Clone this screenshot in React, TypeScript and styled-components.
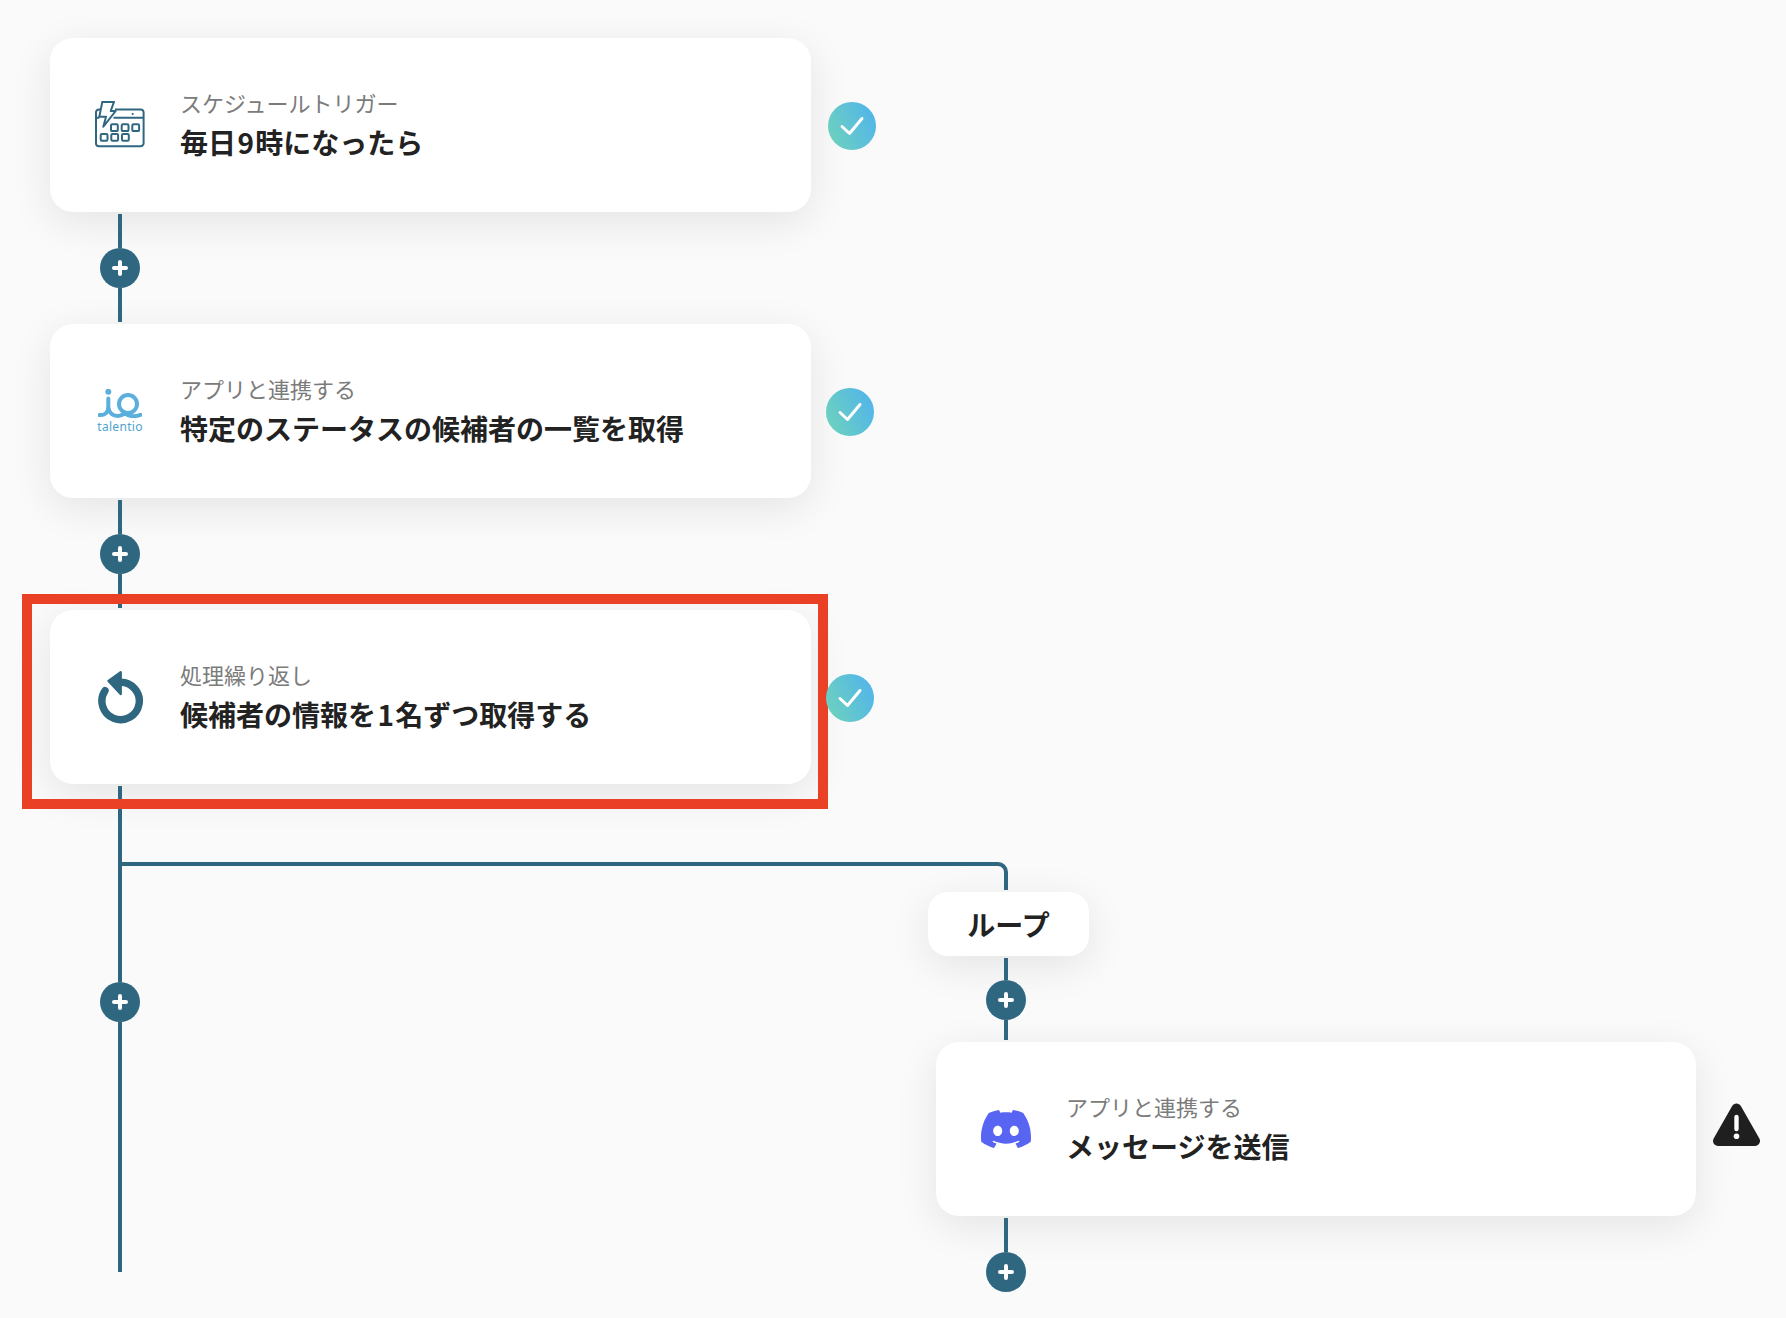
import React from 'react'
import styled, { createGlobalStyle } from 'styled-components'
import { SiDiscord } from 'react-icons/si'

const LINE = '#2f6780'

const GlobalStyle = createGlobalStyle`
    html, body {
        margin: 0;
        padding: 0;
        background: #fafafa;
    }
    * {
        box-sizing: border-box;
    }
`

const Page = styled.div`
    width: 1786px;
    height: 1318px;
    padding: 38px 0 0 50px;
    overflow: hidden;
    background: #fafafa;
    font-family: "Noto Sans CJK JP", "Noto Sans", sans-serif;
`

const StepRow = styled.div<{ $offset?: number }>`
    display: flex;
    align-items: center;
    position: relative;
    margin-left: ${(p) => p.$offset ?? 0}px;
`

const Card = styled.div<{ $width?: number }>`
    display: flex;
    align-items: center;
    flex: none;
    gap: 34px;
    width: ${(p) => p.$width ?? 761}px;
    height: 174px;
    padding-left: 44px;
    background: #fff;
    border-radius: 23px;
    box-shadow: 0 10px 42px rgba(0, 0, 0, 0.09);
`

const IconSlot = styled.div`
    display: flex;
    align-items: center;
    justify-content: center;
    flex: none;
    width: 52px;
    height: 60px;
`

const LogoStack = styled.div`
    display: flex;
    flex-direction: column;
    align-items: center;
`

const LogoName = styled.div`
    font-family: "Noto Sans", sans-serif;
    font-size: 12px;
    font-weight: 400;
    line-height: 14px;
    margin-top: 2px;
    letter-spacing: 0.3px;
    white-space: nowrap;
    color: #4fa3d0;
`

const Texts = styled.div`
    display: flex;
    flex-direction: column;
`

const Caption = styled.div`
    font-size: 22px;
    line-height: 35px;
    margin-bottom: -1px;
    color: #7b7b7b;
`

const Title = styled.div`
    font-size: 28px;
    line-height: 46px;
    font-weight: 700;
    color: #222;
`

const Digit = styled.span`
    margin: 0 1.4px;
`

const Check = styled.div<{ $gap: number }>`
    display: flex;
    align-items: center;
    justify-content: center;
    position: relative;
    z-index: 3;
    flex: none;
    width: 48px;
    height: 48px;
    margin-top: 2px;
    margin-left: ${(p) => p.$gap}px;
    border-radius: 50%;
    background: linear-gradient(65deg, #70d4ba, #4fb2ee);
`

const Warning = styled.div`
    flex: none;
    display: flex;
    width: 47px;
    height: 43px;
    margin: 0 0 9px 17px;
`

const Highlight = styled.div`
    position: absolute;
    z-index: 2;
    left: -28px;
    top: -16px;
    width: 806px;
    height: 215px;
    border: 10px solid #ea4025;
    pointer-events: none;
`

const Connector = styled.div<{ $offset?: number }>`
    display: flex;
    flex-direction: column;
    align-items: center;
    position: relative;
    z-index: 1;
    width: 40px;
    padding: 2px 0;
    margin-left: ${(p) => p.$offset ?? 50}px;
`

const Line = styled.div<{ $length: number }>`
    flex: none;
    width: 4px;
    height: ${(p) => p.$length}px;
    background: ${LINE};
`

const PlusButton = styled.div`
    display: flex;
    align-items: center;
    justify-content: center;
    flex: none;
    width: 40px;
    height: 40px;
    border-radius: 50%;
    background: ${LINE};
`

const Lower = styled.div`
    display: flex;
    align-items: flex-start;
`

const Branch = styled.div`
    display: flex;
    flex-direction: column;
    align-items: flex-start;
    margin-left: -18px;
    padding-top: 78px;
`

const Elbow = styled.div`
    position: relative;
    z-index: 1;
    width: 886px;
    height: 28px;
    border-top: 4px solid ${LINE};
    border-right: 4px solid ${LINE};
    border-top-right-radius: 10px;
`

const Pill = styled.div`
    display: flex;
    align-items: center;
    justify-content: center;
    width: 161px;
    height: 64px;
    margin: 2px 0 0 806px;
    border-radius: 20px;
    background: #fff;
    font-size: 28px;
    font-weight: 700;
    color: #222;
    box-shadow: 0 10px 42px rgba(0, 0, 0, 0.09);
`

function PlusNode() {
    return (
        <PlusButton>
            <svg width="16" height="16" viewBox="0 0 16 16">
                <path d="M8 2v12M2 8h12" stroke="#fff" strokeWidth="4" strokeLinecap="round" fill="none" />
            </svg>
        </PlusButton>
    )
}

function StepConnector({ before, after, offset }: { before: number; after: number; offset?: number }) {
    return (
        <Connector $offset={offset}>
            <Line $length={before} />
            <PlusNode />
            {after > 0 && <Line $length={after} />}
        </Connector>
    )
}

function CheckMark({ gap }: { gap: number }) {
    return (
        <Check $gap={gap}>
            <svg width="26" height="22" viewBox="0 0 26 22">
                <path d="M3 11.5l7.5 7L23 3.5" stroke="#fff" strokeWidth="3" strokeLinecap="round" strokeLinejoin="round" fill="none" />
            </svg>
        </Check>
    )
}

function ScheduleIcon() {
    return (
        <svg width="50" height="48" viewBox="0 0 50 48" fill="none" stroke={LINE} strokeWidth="2" strokeLinejoin="round">
            <path d="M20 8.4h25.6a3 3 0 0 1 3 3v30.8a3 3 0 0 1-3 3H4a3 3 0 0 1-3-3V11.4a3 3 0 0 1 3-3h2.6" />
            <path d="M1 16.7h3.4M18.5 16.7H48.6" />
            <path d="M7.3 0.9H19L15.7 10h5L8.3 25.7 11 15.7H4.3z" fill="#fff" />
            <circle cx="37.7" cy="13" r="1.1" fill={LINE} stroke="none" />
            <rect x="16" y="23.3" width="6.8" height="6.8" rx="1.2" />
            <rect x="26.7" y="23.3" width="6.8" height="6.8" rx="1.2" />
            <rect x="37.3" y="23.3" width="6.8" height="6.8" rx="1.2" />
            <rect x="5.7" y="33" width="6.8" height="6.8" rx="1.2" />
            <rect x="16.3" y="33" width="6.8" height="6.8" rx="1.2" />
            <rect x="27" y="33" width="6.8" height="6.8" rx="1.2" />
        </svg>
    )
}

function TalentioLogo() {
    return (
        <LogoStack>
            <svg width="44" height="29" viewBox="0 0 44 29" fill="none">
                <circle cx="10.3" cy="2.8" r="3" fill="#5bafdd" />
                <circle cx="30" cy="15" r="9" stroke="#5bafdd" strokeWidth="4" />
                <path
                    d="M10.3 9.5V18C10.3 24 6 26.6 1.6 26M10.3 18C11 24 15 27 19.5 27C23 27 25.2 26 26.6 23.6C30 27.6 37 28 42.4 25.8"
                    stroke="#5bafdd"
                    strokeWidth="4"
                    strokeLinecap="round"
                    strokeLinejoin="round"
                />
            </svg>
            <LogoName>talentio</LogoName>
        </LogoStack>
    )
}

function RepeatIcon() {
    return (
        <svg width="46" height="54" viewBox="0 0 46 54" fill="none">
            <path d="M8 20.7A18.7 18.7 0 1 0 23 12.3" stroke={LINE} strokeWidth="7.4" strokeLinecap="round" />
            <path d="M11.5 11L23.7 2.2V24z" fill={LINE} stroke={LINE} strokeWidth="2.4" strokeLinejoin="round" />
        </svg>
    )
}

function WarningIcon() {
    return (
        <svg width="47" height="43" viewBox="0 0 47 43">
            <path d="M23.5 5.5L42 38H5z" fill="#1f1f1f" stroke="#1f1f1f" strokeWidth="10" strokeLinejoin="round" />
            <path d="M23.5 14V26" stroke="#fff" strokeWidth="4.4" strokeLinecap="round" />
            <circle cx="23.5" cy="33.2" r="2.8" fill="#fff" />
        </svg>
    )
}

function StepCard({ icon, caption, title, width }: { icon: React.ReactNode; caption: string; title: React.ReactNode; width?: number }) {
    return (
        <Card $width={width}>
            <IconSlot>{icon}</IconSlot>
            <Texts>
                <Caption>{caption}</Caption>
                <Title>{title}</Title>
            </Texts>
        </Card>
    )
}

export default function App() {
    return (
        <Page>
            <GlobalStyle />
            <StepRow>
                <StepCard icon={<ScheduleIcon />} caption="スケジュールトリガー" title={<>毎日<Digit>9</Digit>時になったら</>} />
                <CheckMark gap={17} />
            </StepRow>
            <StepConnector before={34} after={34} />
            <StepRow>
                <StepCard icon={<TalentioLogo />} caption="アプリと連携する" title="特定のステータスの候補者の一覧を取得" />
                <CheckMark gap={15} />
            </StepRow>
            <StepConnector before={34} after={34} />
            <StepRow>
                <Highlight />
                <StepCard icon={<RepeatIcon />} caption="処理繰り返し" title={<>候補者の情報を<Digit>1</Digit>名ずつ取得する</>} />
                <CheckMark gap={15} />
            </StepRow>
            <Lower>
                <StepConnector before={196} after={250} />
                <Branch>
                    <Elbow />
                    <Pill>ループ</Pill>
                    <StepConnector before={22} after={20} offset={864} />
                    <StepRow $offset={814}>
                        <StepCard
                            width={760}
                            icon={<SiDiscord size={50} color="#5865f2" />}
                            caption="アプリと連携する"
                            title="メッセージを送信"
                        />
                        <Warning>
                            <WarningIcon />
                        </Warning>
                    </StepRow>
                    <StepConnector before={34} after={0} offset={864} />
                </Branch>
            </Lower>
        </Page>
    )
}
